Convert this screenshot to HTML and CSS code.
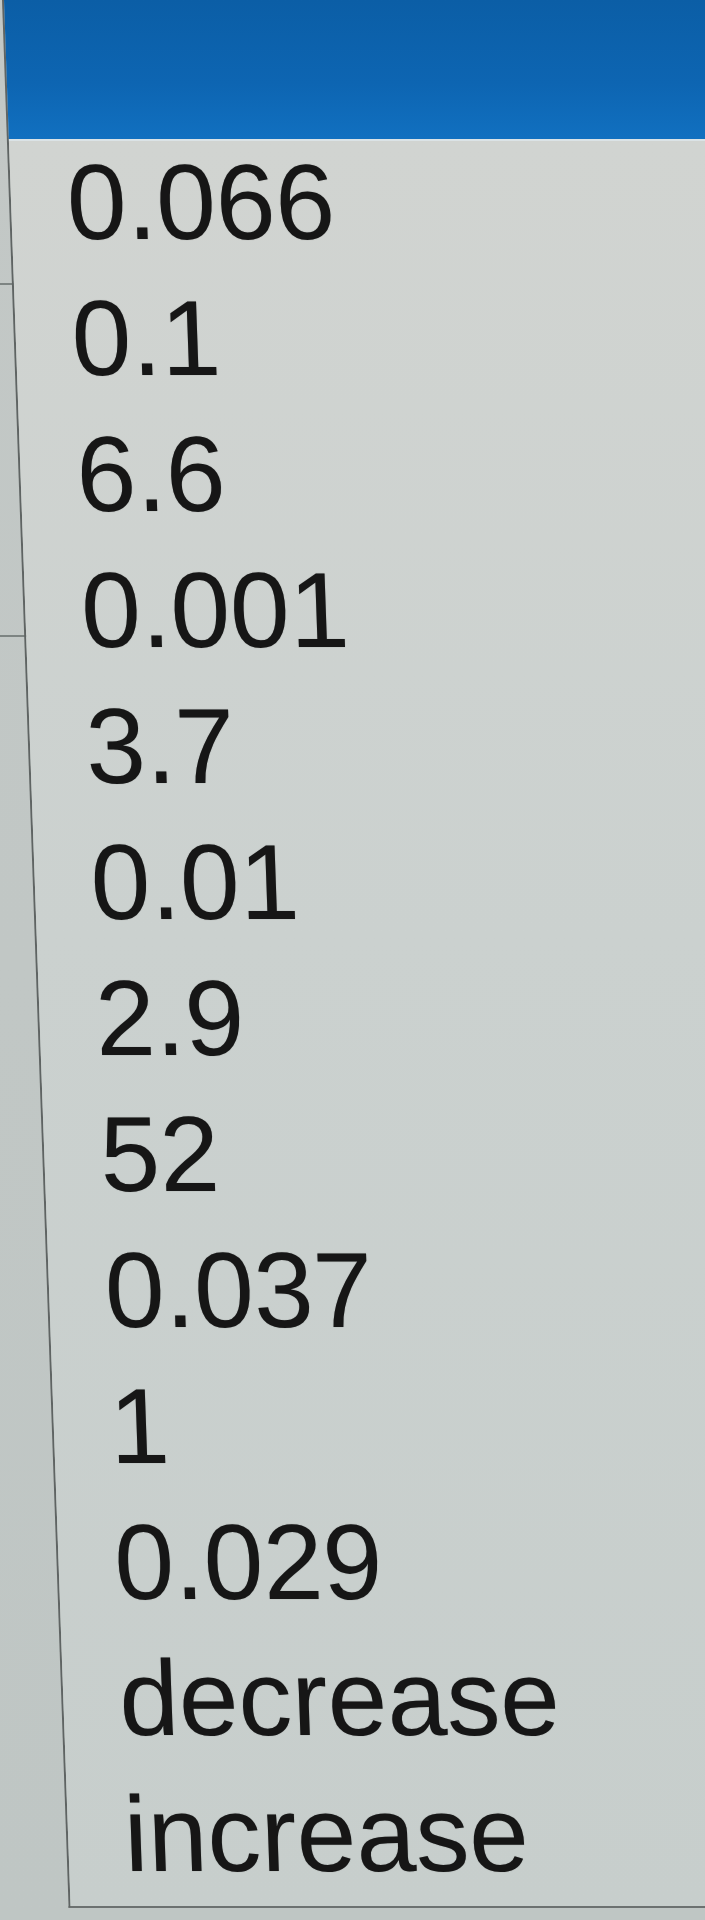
FILE: index.html
```html
<!DOCTYPE html>
<html lang="en">
<head>
    <meta charset="UTF-8">
    <meta name="viewport" content="width=device-width, initial-scale=1.0">
    <title>Dropdown</title>
    <link rel="stylesheet" href="styles.css">
</head>
<body>
    <div class="dropdown">
        <div class="selected"></div>
        <ul class="options">
            <li>0.066</li>
            <li>0.1</li>
            <li>6.6</li>
            <li>0.001</li>
            <li>3.7</li>
            <li>0.01</li>
            <li>2.9</li>
            <li>52</li>
            <li>0.037</li>
            <li>1</li>
            <li>0.029</li>
            <li>decrease</li>
            <li>increase</li>
        </ul>
    </div>
</body>
</html>
```

FILE: styles.css
```css
* {
    margin: 0;
    padding: 0;
    box-sizing: border-box;
}

html, body {
    overflow: hidden;
}

body {
    min-height: 100vh;
    font-family: 'Liberation Sans', Arial, sans-serif;
    /* window behind the list, with two row lines peeking out on the left */
    background:
        linear-gradient(to bottom, transparent 283px, #7d8482 283px, #7d8482 285px, transparent 285px),
        linear-gradient(to bottom, transparent 635px, #7d8482 635px, #7d8482 637px, transparent 637px),
        linear-gradient(to bottom, #c3c8c6 0%, #bfc6c4 100%);
}

/* the photo is taken at a slight slant */
.dropdown {
    width: 780px;
    margin-left: 2px;
    transform: skewX(2deg);
    transform-origin: 0 0;
    border-left: 2px solid #5f6463;
    border-bottom: 2px solid #6c7170;
}

.selected {
    height: 141px;
    background: linear-gradient(to bottom, #0b5ea6 0%, #0d65b2 60%, #1170c0 100%);
    border-bottom: 2px solid #dbe3e6;
}

.options {
    list-style: none;
    padding: 0 0 4px 56px;
    background: linear-gradient(to bottom, #d1d4d1 0%, #cbd1cf 45%, #c7cecc 100%);
    color: #161616;
    font-size: 107px;
    line-height: 136px;
}

.options li {
    white-space: nowrap;
    text-shadow: 0 0 1px rgba(0, 0, 0, 0.35);
}

.options li:first-child {
    line-height: 122px;
    padding-bottom: 7px;
}
```
